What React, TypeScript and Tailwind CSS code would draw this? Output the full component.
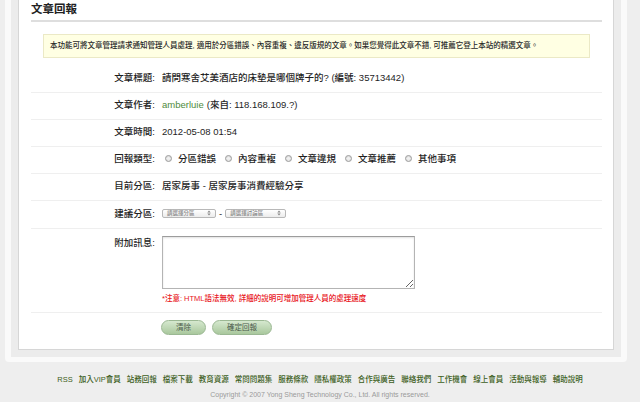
const font = { fontFamily: '"Liberation Sans", "Noto Sans CJK TC", sans-serif' }

const reportTypes = ['分區錯誤', '內容重複', '文章違規', '文章推薦', '其他事項']

const footerLinks = [
  'RSS', '加入VIP會員', '站務回報', '檔案下載', '教育資源', '常問問題集', '服務條款',
  '隱私權政策', '合作與廣告', '聯絡我們', '工作機會', '線上會員', '活動與報導', '輔助說明',
]

function Row({ label, children, className = '' }: { label: string; children: React.ReactNode; className?: string }) {
  return (
    <div className={`flex items-center h-[27px] pb-[3px] border-b border-[#efefef] ${className}`}>
      <div className="w-[124px] text-right text-[9.5px] leading-[11px] font-medium text-[#1e1e1e]">{label}</div>
      <div className="pl-[7px] text-[9.5px] leading-[11px] font-medium text-[#1e1e1e] flex items-center">{children}</div>
    </div>
  )
}

function Radio({ label }: { label: string }) {
  return (
    <label className="flex items-center pl-[3px]">
      <span className="w-[7px] h-[7px] rounded-full border border-[#9a9a9a] bg-gradient-to-b from-[#ffffff] to-[#e2e2e2] shadow-[inset_0_1px_1px_rgba(0,0,0,0.15)]" />
      <span className="ml-[6px]">{label}</span>
    </label>
  )
}

function FakeSelect({ text, width }: { text: string; width: string }) {
  return (
    <div className={`${width} h-[9px] flex items-center justify-between rounded-[2px] border border-[#b8b8b8] bg-gradient-to-b from-[#ffffff] to-[#ececec] px-[4px]`}>
      <span className="text-[5.5px] leading-[6px] text-[#8a8a8a]">{text}</span>
      <svg width="4" height="6" viewBox="0 0 4 6">
        <path d="M0.3 2.4 L2 0.6 L3.7 2.4 Z M0.3 3.6 L2 5.4 L3.7 3.6 Z" fill="#888" />
      </svg>
    </div>
  )
}

function GreenButton({ text, width }: { text: string; width: string }) {
  return (
    <button className={`${width} h-[15px] rounded-full border border-[#9bb893] bg-gradient-to-b from-[#d6e8cf] to-[#a9c89d] text-[7.5px] leading-[13px] text-[#4c5c4c]`}>
      {text}
    </button>
  )
}

export default function App() {
  return (
    <div className="min-h-[402px] bg-[#eeeeee]" style={font}>
      {/* framed panel */}
      <div className="ml-[5px] w-[622px] bg-[#fafafa] px-[6px] pb-[5px] rounded-b-[4px]">
        <div className="bg-[#ececec] px-[7px] pb-[7px]">
          <div className="bg-white border-x border-b border-[#d6d6d6] pl-[12px] pr-[11px] h-[350px]">
            <h1 className="text-[11.5px] leading-[16px] pt-[1px] font-bold text-[#222]">文章回報</h1>
            <div className="mt-[3px] h-[2px] bg-[#dedede]" />

            <div className="mt-[12px] mx-[12px] h-[24px] flex items-center pl-[6px] bg-[#ffffe3] border border-[#ebe9c6] text-[7.5px] font-medium text-[#2a2a2a]">
              本功能可將文章管理請求通知管理人員處理, 適用於分區錯誤、內容重複、違反版規的文章。如果您覺得此文章不錯, 可推薦它登上本站的精選文章。
            </div>

            <div className="mt-[8px]">
              <Row label="文章標題:">請問寒舍艾美酒店的床墊是哪個牌子的? (編號: 35713442)</Row>
              <Row label="文章作者:">
                <span className="text-[#4f8a3c] font-normal">amberluie</span>
                <span className="ml-[3px]">(來自: 118.168.109.?)</span>
              </Row>
              <Row label="文章時間:">2012-05-08 01:54</Row>
              <Row label="回報類型:">
                <div className="flex gap-[6px]">
                  {reportTypes.map((t) => (
                    <Radio key={t} label={t} />
                  ))}
                </div>
              </Row>
              <Row label="目前分區:">居家房事 - 居家房事消費經驗分享</Row>
              <Row label="建議分區:" className="h-[28px]">
                <FakeSelect text="請選擇分區" width="w-[54px]" />
                <span className="mx-[3px]">-</span>
                <FakeSelect text="請選擇討論區" width="w-[61px]" />
              </Row>

              {/* message row */}
              <div className="flex h-[84px] pt-[7px] border-b border-[#efefef]">
                <div className="w-[124px] text-right text-[9.5px] leading-[11px] pt-[1px] font-medium text-[#1e1e1e]">附加訊息:</div>
                <div className="pl-[7px]">
                  <textarea className="block w-[253px] h-[53px] border border-[#b4b4b4] border-t-[#9c9c9c] bg-white shadow-[inset_0_1px_2px_rgba(0,0,0,0.12)] outline-none" />
                  <p className="mt-[5px] text-[7.5px] leading-[9px] font-medium text-[#e8141b]">
                    *注意: HTML語法無效, 詳細的說明可增加管理人員的處理速度
                  </p>
                </div>
              </div>

              <div className="flex gap-[6px] pl-[130px] pt-[7px]">
                <GreenButton text="清除" width="w-[45px]" />
                <GreenButton text="確定回報" width="w-[60px]" />
              </div>
            </div>
          </div>
        </div>
      </div>

      {/* footer */}
      <div className="pt-[13px] flex flex-col items-center">
        <div className="flex gap-[6px] text-[7.5px] leading-[9px] font-medium text-[#3c5e22]">
          {footerLinks.map((l) => (
            <span key={l}>{l}</span>
          ))}
        </div>
        <div className="mt-[6px] text-[7px] leading-[9px] text-[#9a9a9a]">
          Copyright © 2007 Yong Sheng Technology Co., Ltd. All rights reserved.
        </div>
      </div>
    </div>
  )
}
